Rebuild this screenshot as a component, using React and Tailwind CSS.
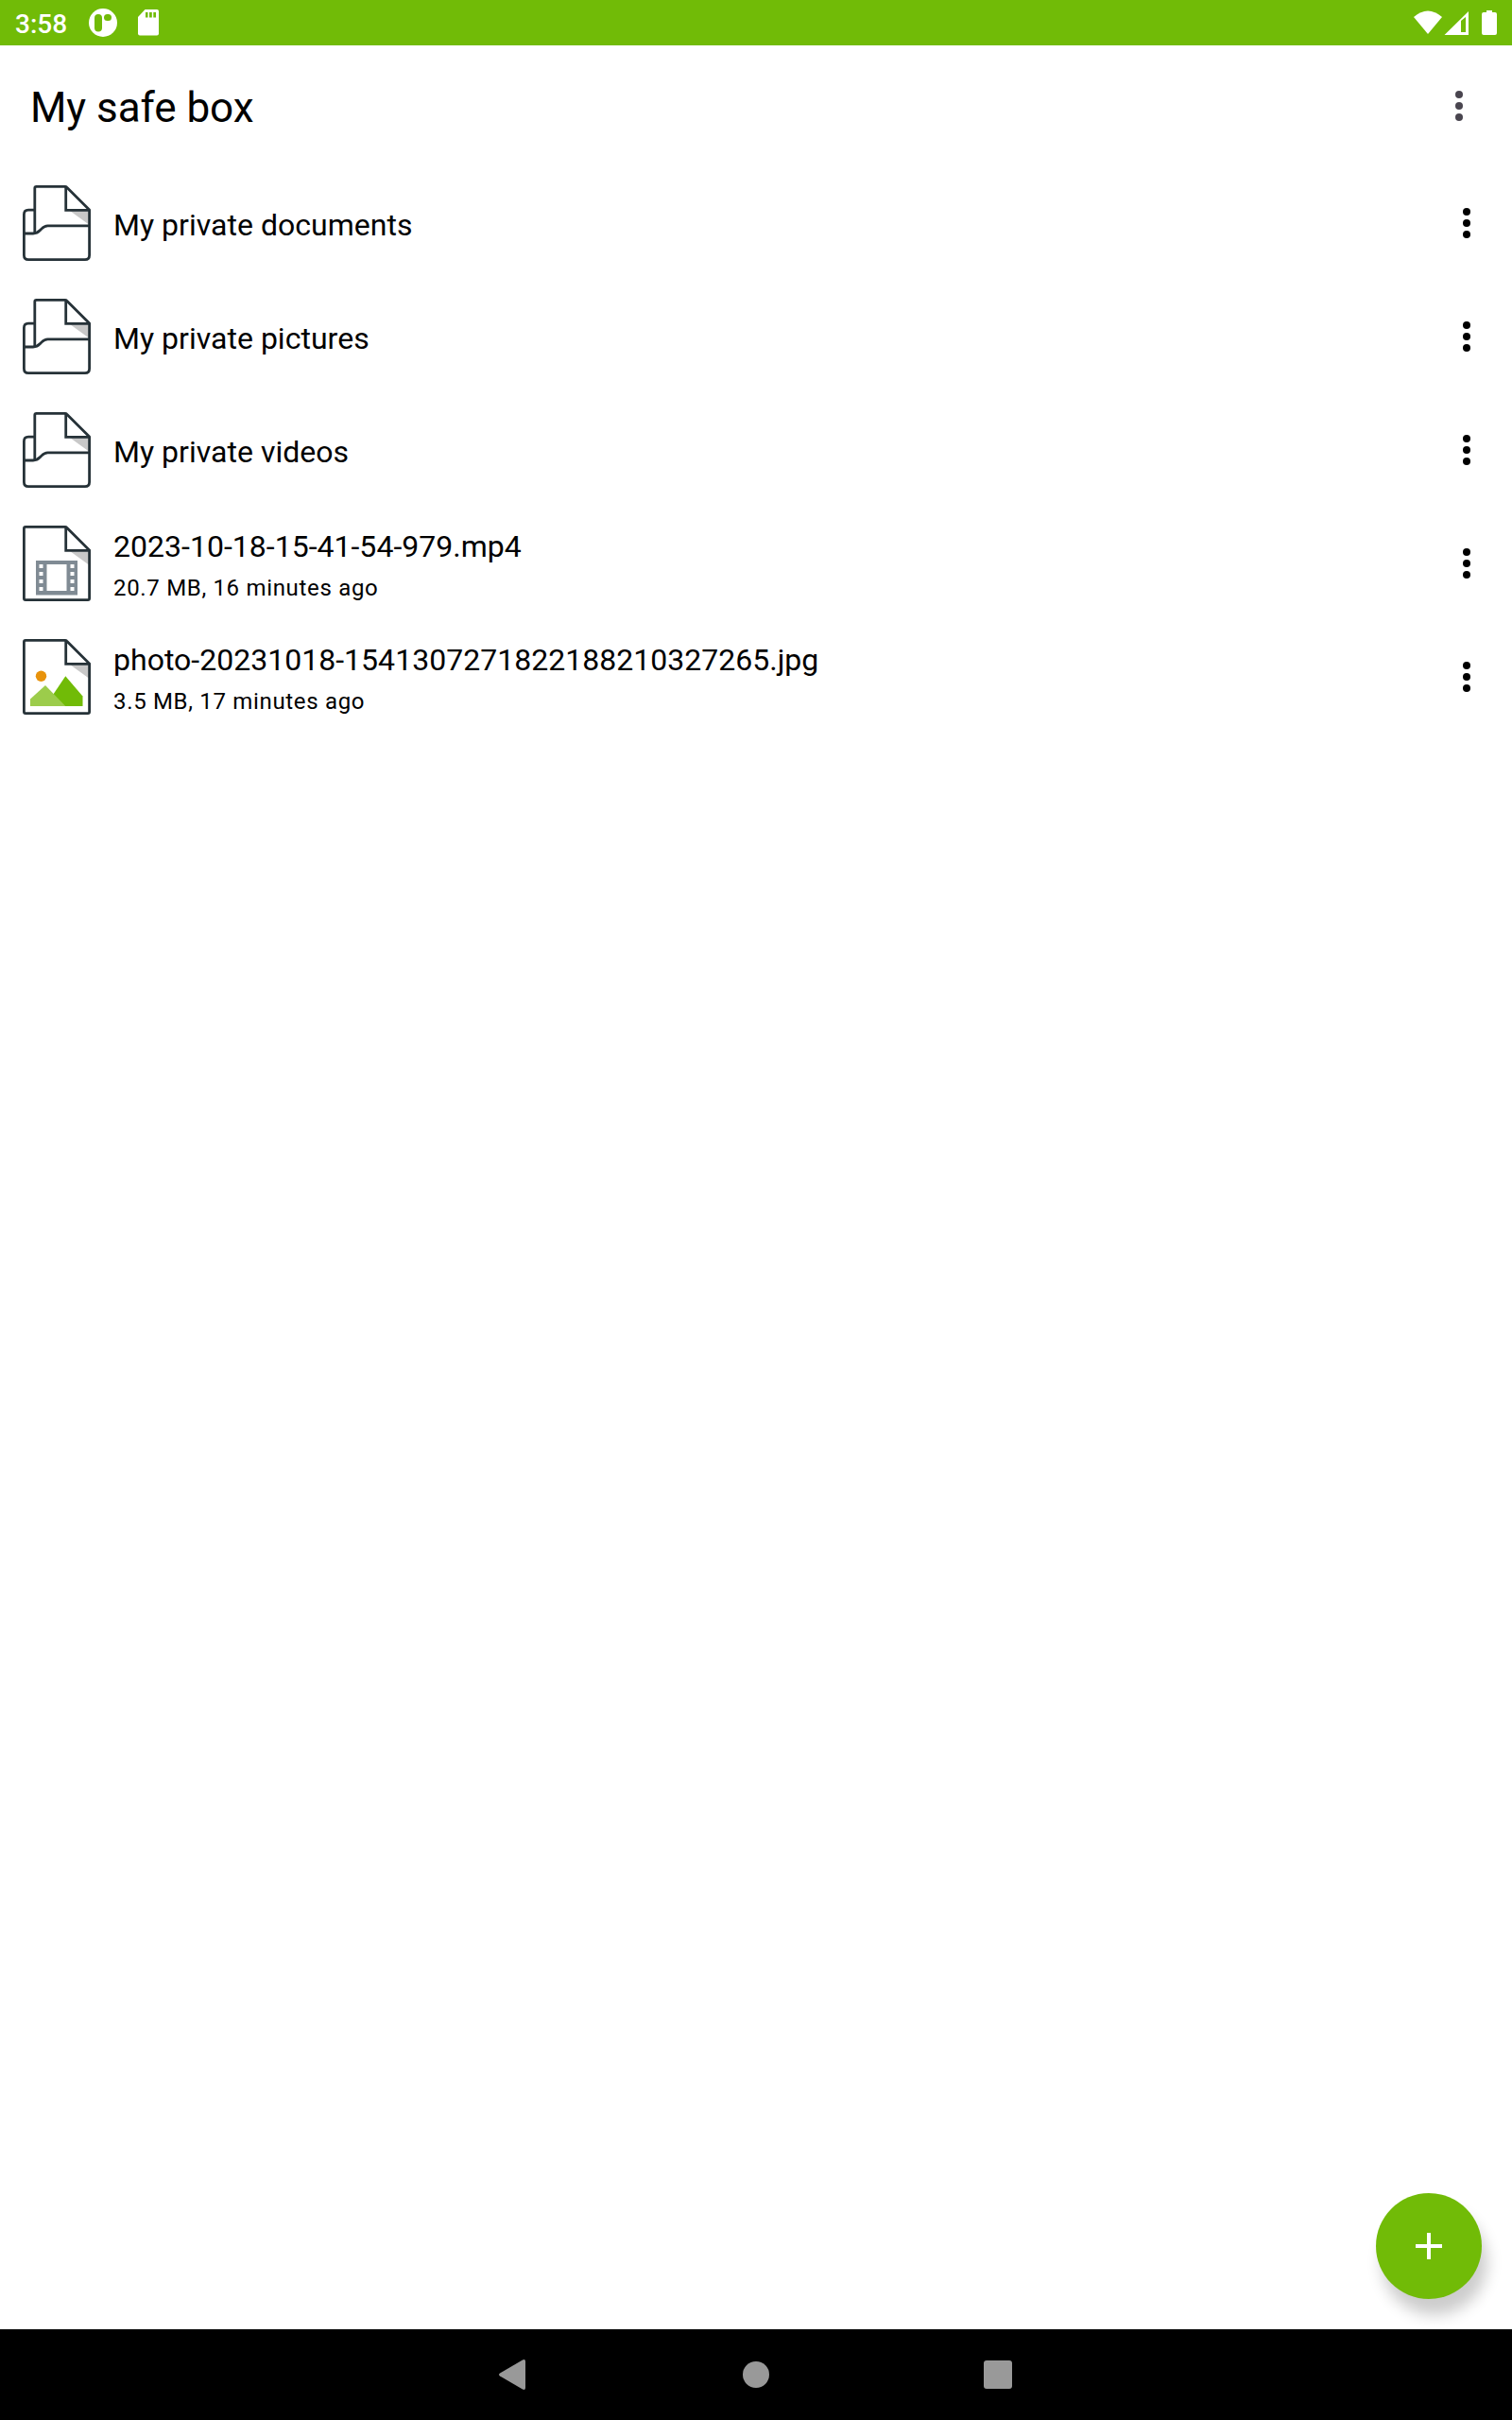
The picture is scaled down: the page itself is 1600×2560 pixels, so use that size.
const INK = '#263238';

function FolderIcon() {
  return (
    <svg viewBox="0 0 80 80" className="size-20 shrink-0" fill="none" stroke={INK} strokeWidth="2.8" strokeLinejoin="round">
      <path d="M54 27H74V41.5Z" fill="#c8c8c8" stroke="none" />
      <path d="M16 26.200H10Q5.400 26.200 5.400 30.800V74Q5.400 78.600 10 78.600H70Q74.600 78.600 74.600 74V26L50.500 2Q50 1.400 49 1.400H18.500Q16.800 1.400 16.800 3V51" />
      <path d="M49.700 2V26.300H75" strokeLinejoin="miter" />
      <path d="M5 51H15C20 51 21 49 23.500 46.500C26 44 27 42.800 30.500 42.800H75" />
    </svg>
  );
}

function FileIcon({ children }) {
  return (
    <svg viewBox="0 0 80 80" className="size-20 shrink-0">
      <path d="M54 27H74V41.500Z" fill="#c8c8c8" />
      <path d="M5.400 3Q5.400 1.400 7 1.400H49Q50 1.400 50.500 2L74.600 26V77Q74.600 78.600 73 78.600H7Q5.400 78.600 5.400 77Z M49.700 2V26.300H75" fill="none" stroke={INK} strokeWidth="2.8" />
      {children}
    </svg>
  );
}

function VideoIcon() {
  return (
    <FileIcon>
      <path d="M18 37H62V73.500H18Z" fill="#808b94" />
      <path d="M29.500 41H50.500V69H29.500Z" fill="#fff" />
      {[41, 49, 57, 65].map((y) => (
        <g key={y} fill="#fff">
          <rect x="21.500" y={y} width="4" height="4" />
          <rect x="54.500" y={y} width="4" height="4" />
        </g>
      ))}
    </FileIcon>
  );
}

function PictureIcon() {
  return (
    <FileIcon>
      <circle cx="23.500" cy="39.300" r="5.700" fill="#e8930c" />
      <path d="M28 71L49.300 39.300L67.500 60.500V71Z" fill="#71bb07" />
      <path d="M12 71V63.500L28 49L49.300 71Z" fill="#9ccc4b" />
    </FileIcon>
  );
}

function Dots({ className }) {
  return (
    <svg viewBox="0 0 8 32" className={className} fill="currentColor">
      <circle cx="4" cy="4" r="4" />
      <circle cx="4" cy="16" r="4" />
      <circle cx="4" cy="28" r="4" />
    </svg>
  );
}

const items = [
  { name: 'My private documents', Icon: FolderIcon },
  { name: 'My private pictures', Icon: FolderIcon },
  { name: 'My private videos', Icon: FolderIcon },
  { name: '2023-10-18-15-41-54-979.mp4', info: '20.7 MB, 16 minutes ago', Icon: VideoIcon },
  { name: 'photo-20231018-1541307271822188210327265.jpg', info: '3.5 MB, 17 minutes ago', Icon: PictureIcon },
];

function StatusBar() {
  return (
    <header className="flex h-12 shrink-0 items-center bg-[#71bb07] pl-4 pr-3.5 text-white">
      <span className="w-[77px] pt-[3px] text-[28px] leading-8 font-medium">3:58</span>
      <svg viewBox="0 0 32 32" className="size-8">
        <circle cx="16" cy="16" r="15" fill="#fff" />
        <rect x="7" y="7" width="8" height="18.500" rx="4" fill="#71bb07" />
        <rect x="17" y="7" width="8" height="7" rx="3.500" fill="#71bb07" />
      </svg>
      <svg viewBox="0 0 24 28" className="ml-5 h-7 w-6">
        <path d="M8.500 0H21Q23 0 23 2V25.500Q23 27.500 21 27.500H3Q1 27.500 1 25.500V8Z" fill="#fff" />
        <path d="M9 3H11.500V8.500H9ZM13 3H15.800V8.500H13ZM17.300 3H20V8.500H17.300Z" fill="#71bb07" />
      </svg>
      <svg viewBox="0 0 90 28" className="ml-auto h-7 w-[90px]" fill="#fff">
        <path d="M0 8Q15 -5 30 8L15 26Z" />
        <path fillRule="evenodd" d="M32.500 27L58 2V27ZM50 12L55 8V24H50Z" />
        <path d="M77 1H83V3H86Q88 3 88 5V25Q88 27 86 27H74Q72 27 72 25V5Q72 3 74 3H77Z" />
      </svg>
    </header>
  );
}

export default function App() {
  return (
    <div className="flex h-[2560px] w-[1600px] flex-col bg-white font-[Roboto,sans-serif] text-black">
      <StatusBar />
      <div className="flex h-32 items-center justify-between pl-8 pr-[52px]">
        <h1 className="pt-[3px] text-[44px] leading-[52px] tracking-[-0.05px]">My safe box</h1>
        <Dots className="h-8 w-2 text-[#49454f]" />
      </div>
      <main className="flex flex-1 flex-col">
        {items.map(({ name, info, Icon }) => (
          <div key={name} className="flex h-[120px] items-center pl-5 pr-11">
            <Icon />
            <div className={info ? 'ml-5 flex flex-1 flex-col pt-[9px]' : 'ml-5 flex flex-1 flex-col pt-1'}>
              <span className="text-[32px] leading-[44px] tracking-[0.02px]">{name}</span>
              {info && <span className="text-[24px] leading-[45px] tracking-[0.68px]">{info}</span>}
            </div>
            <Dots className="h-8 w-2" />
          </div>
        ))}
        <button className="mt-auto mr-8 mb-8 flex size-28 items-center justify-center self-end rounded-full bg-[#71bb07] shadow-[6px_17px_16px_rgba(0,0,0,0.2)]">
          <svg viewBox="0 0 28 28" className="size-7">
            <path d="M12 0H16V12H28V16H16V28H12V16H0V12H12Z" fill="#fff" />
          </svg>
        </button>
      </main>
      <nav className="flex h-24 shrink-0 items-center justify-center bg-black">
        <div className="flex w-64 justify-center">
          <svg viewBox="0 0 32 32" className="size-8" fill="#999">
            <path d="M1 14.500L25 0.400Q28 -0.600 28 2V30Q28 32.600 25 31.600L1 17.500Q-1 16 1 14.500Z" />
          </svg>
        </div>
        <div className="flex w-64 justify-center">
          <div className="size-7 rounded-full bg-[#999]" />
        </div>
        <div className="flex w-64 justify-center">
          <div className="size-[30px] rounded-[3px] bg-[#999]" />
        </div>
      </nav>
    </div>
  );
}
